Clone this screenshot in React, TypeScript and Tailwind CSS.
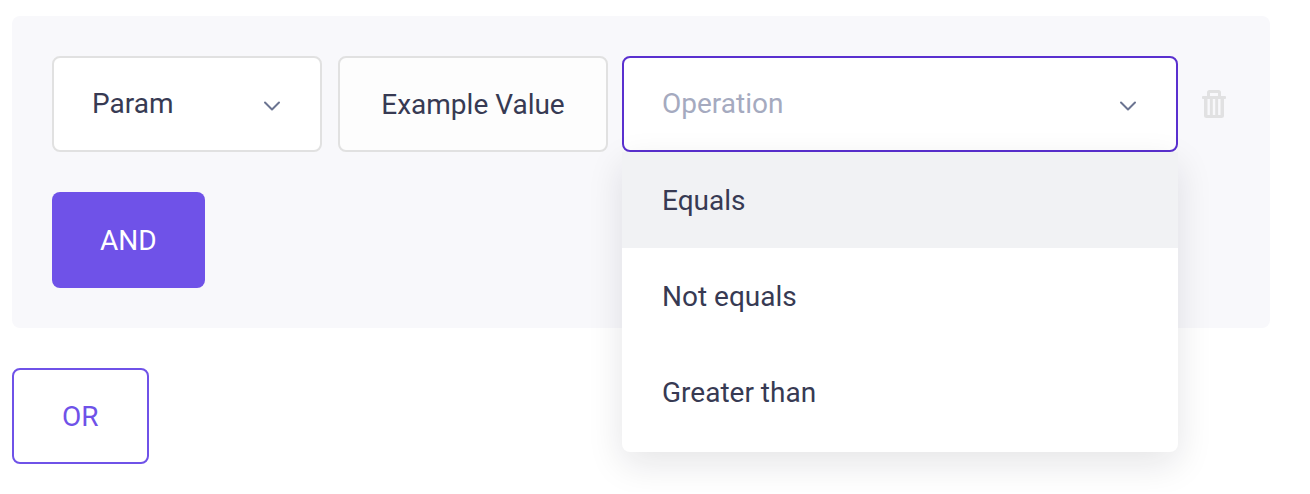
import { useState } from "react";
import clsx from "clsx";

const params = ["Param"];
const operations = ["Equals", "Not equals", "Greater than"];

const Chevron = () => (
	<span className="pointer-events-none absolute inset-y-0 right-10 flex items-center pt-1">
		<svg
			viewBox="0 0 20 12"
			aria-hidden="true"
			className="h-3 w-5 fill-none stroke-[#6b7491]"
			strokeWidth="2"
			strokeLinecap="round"
			strokeLinejoin="round"
		>
			<path d="M3 2.500 10 9.500 17 2.500" />
		</svg>
	</span>
);

const TrashIcon = () => (
	<svg viewBox="0 0 24 28" aria-hidden="true" className="h-7 w-6 fill-[#e1e1e2]">
		<path
			fillRule="evenodd"
			d="M7.500 0h9A2.500 2.500 0 0 1 19 2.500V6h4a1 1 0 0 1 1 1v1a1 1 0 0 1-1 1h-1v16.500A2.500 2.500 0 0 1 19.500 28h-15A2.500 2.500 0 0 1 2 25.500V9H1A1 1 0 0 1 0 8V7a1 1 0 0 1 1-1h4V2.500A2.500 2.500 0 0 1 7.500 0ZM8 3v3h8V3ZM5.500 9v16h2.400V9ZM10.800 9v16h2.400V9ZM16.100 9v16h2.400V9Z"
		/>
	</svg>
);

const fieldClass =
	"h-24 w-full appearance-none rounded-lg border-2 px-[38px] text-[28px] outline-none";

export default function App() {
	const [operation, setOperation] = useState("");
	const [open, setOpen] = useState(true);
	const [active, setActive] = useState(0);
	const [value, setValue] = useState("Example Value");

	const choose = (name: string) => {
		setOperation(name);
		setOpen(false);
	};

	return (
		<main className="bg-white pt-4 pr-10 pb-7 pl-3 font-['Roboto',sans-serif] text-[28px] text-[#373a53]">
			<section className="rounded-lg bg-[#f8f8fb] p-10">
				{/* Condition row */}
				<div className="flex items-center">
					<div className="relative mr-4 w-[270px]">
						<select aria-label="Param" className={clsx(fieldClass, "border-[#e1e1e1] bg-white")}>
							{params.map((param) => (
								<option key={param}>{param}</option>
							))}
						</select>
						<Chevron />
					</div>

					<div className="mr-3.5 w-[270px]">
						<input
							type="text"
							aria-label="Value"
							value={value}
							onChange={(e) => setValue(e.target.value)}
							className={clsx(fieldClass, "border-[#e1e1e1] bg-[#fdfdfd] text-center")}
						/>
					</div>

					<div className="relative mr-5 flex-1">
						<select
							aria-label="Operation"
							value={operation}
							onChange={(e) => choose(e.target.value)}
							className={clsx(
								fieldClass,
								"border-[#5a30cf] bg-white",
								!operation && "text-[#a5aabf]",
							)}
						>
							<option value="" disabled>
								Operation
							</option>
							{operations.map((name) => (
								<option key={name}>{name}</option>
							))}
						</select>
						<Chevron />

						{/* Operation menu */}
						{open && (
							<ul className="absolute top-full right-0 left-0 z-10 rounded-b-lg bg-white pb-3 shadow-[0_12px_36px_rgba(20,15,40,0.11)]">
								{operations.map((name, idx) => (
									<li key={name}>
										<button
											type="button"
											onClick={() => choose(name)}
											onMouseEnter={() => setActive(idx)}
											className={clsx(
												"h-24 w-full px-10 pt-0.5 text-left",
												idx === active && "bg-[#f1f2f4]",
											)}
										>
											{name}
										</button>
									</li>
								))}
							</ul>
						)}
					</div>

					<button type="button" aria-label="Remove condition" className="p-1">
						<TrashIcon />
					</button>
				</div>

				<button
					type="button"
					className="mt-10 block h-24 rounded-lg bg-[#6f52e8] px-12 pt-0.5 text-white"
				>
					AND
				</button>
			</section>

			<button
				type="button"
				className="mt-10 block h-24 rounded-lg border-2 border-[#6f52e8] bg-white px-12 pt-0.5 text-[#6f52e8]"
			>
				OR
			</button>
		</main>
	);
}
